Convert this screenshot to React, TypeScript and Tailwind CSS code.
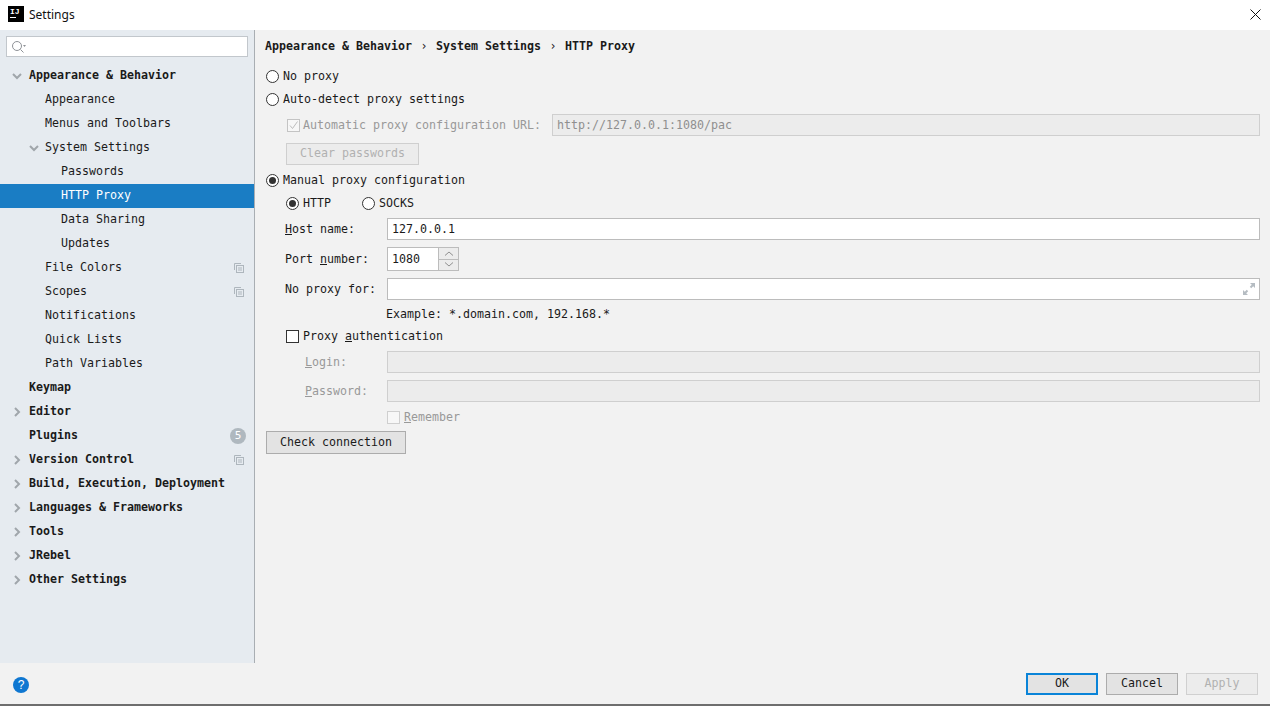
import React from 'react';

const mono = "font-['DejaVu_Sans_Mono',monospace] text-[11.63px]";

type TreeItem = {
  label: string;
  indent: 0 | 1 | 2;
  bold?: boolean;
  arrow?: 'open' | 'closed';
  selected?: boolean;
  copy?: boolean;
  badge?: string;
};

const tree: TreeItem[] = [
  { label: 'Appearance & Behavior', indent: 0, bold: true, arrow: 'open' },
  { label: 'Appearance', indent: 1 },
  { label: 'Menus and Toolbars', indent: 1 },
  { label: 'System Settings', indent: 1, arrow: 'open' },
  { label: 'Passwords', indent: 2 },
  { label: 'HTTP Proxy', indent: 2, selected: true },
  { label: 'Data Sharing', indent: 2 },
  { label: 'Updates', indent: 2 },
  { label: 'File Colors', indent: 1, copy: true },
  { label: 'Scopes', indent: 1, copy: true },
  { label: 'Notifications', indent: 1 },
  { label: 'Quick Lists', indent: 1 },
  { label: 'Path Variables', indent: 1 },
  { label: 'Keymap', indent: 0, bold: true },
  { label: 'Editor', indent: 0, bold: true, arrow: 'closed' },
  { label: 'Plugins', indent: 0, bold: true, badge: '5' },
  { label: 'Version Control', indent: 0, bold: true, arrow: 'closed', copy: true },
  { label: 'Build, Execution, Deployment', indent: 0, bold: true, arrow: 'closed' },
  { label: 'Languages & Frameworks', indent: 0, bold: true, arrow: 'closed' },
  { label: 'Tools', indent: 0, bold: true, arrow: 'closed' },
  { label: 'JRebel', indent: 0, bold: true, arrow: 'closed' },
  { label: 'Other Settings', indent: 0, bold: true, arrow: 'closed' },
];

const Arrow = ({ open }: { open: boolean }) => (
  <svg width="10" height="10" viewBox="0 0 10 10" fill="none" stroke="#a0a6ab" strokeWidth="2">
    {open ? <path d="M1 3l4 4 4-4" /> : <path d="M3 1l4 4-4 4" />}
  </svg>
);

const CopyIcon = () => (
  <svg width="10" height="10" viewBox="0 0 10 10" fill="none" stroke="#aeb6bd" strokeWidth="1">
    <path d="M.5 7V.5H7" />
    <rect x="2.5" y="2.5" width="7" height="7" />
    <path d="M4 5h4M4 7h4" />
  </svg>
);

const TreeRow = ({ item }: { item: TreeItem }) => {
  const pad = item.indent === 0 ? 'pl-[29px]' : item.indent === 1 ? 'pl-[45px]' : 'pl-[61px]';
  const arrowPos = item.indent === 0 ? 'left-[12px]' : 'left-[29px]';
  return (
    <div className={`relative flex h-6 items-center pr-[10px] ${pad} ${item.selected ? 'bg-[#1a7dc4] text-white' : 'text-[#1a1a1a]'}`}>
      {item.arrow && (
        <span className={`absolute top-[7px] ${arrowPos}`}>
          <Arrow open={item.arrow === 'open'} />
        </span>
      )}
      <span className={`flex-1 whitespace-pre ${item.bold ? 'font-bold' : ''}`}>{item.label}</span>
      {item.copy && <CopyIcon />}
      {item.badge && (
        <span className="-mr-[2px] flex h-4 w-4 items-center justify-center rounded-full bg-[#afb8bf] text-[11px] text-white">{item.badge}</span>
      )}
    </div>
  );
};

const Radio = ({ checked }: { checked?: boolean }) => (
  <span className="flex h-[13px] w-[13px] shrink-0 items-center justify-center rounded-full border border-[#333] bg-white">
    {checked && <span className="h-[7px] w-[7px] rounded-full bg-[#333]" />}
  </span>
);

const RadioRow = ({ label, checked, className }: { label: string; checked?: boolean; className: string }) => (
  <div className={`flex items-center gap-[4px] text-[#1a1a1a] ${className}`}>
    <Radio checked={checked} />
    <span className="whitespace-pre pt-[2px]">{label}</span>
  </div>
);

const Button = ({ children, className }: { children: React.ReactNode; className: string }) => (
  <button type="button" className={`flex items-center justify-center border ${className}`}>
    {children}
  </button>
);

export default function App() {
  return (
    <div className={`flex h-[706px] w-[1270px] flex-col overflow-hidden bg-white ${mono}`}>
      {/* Title bar */}
      <div className="flex h-[30px] shrink-0 items-center bg-white pl-2 pr-[9px]">
        <div className="mb-[2px] flex h-4 w-4 flex-col bg-black px-[2px] pt-[1px] text-white">
          <span className="font-['Liberation_Mono',monospace] text-[8px] font-bold leading-[9px]">IJ</span>
          <span className="mt-[1px] h-px w-[6px] bg-white" />
        </div>
        <span className="ml-[5px] flex-1 font-['Noto_Sans',sans-serif] text-[12px] text-[#111]">Settings</span>
        <svg className="mb-[2px]" width="11" height="11" viewBox="0 0 11 11" stroke="#111" strokeWidth="1" fill="none">
          <path d="M.5.5l10 10M10.5.5l-10 10" />
        </svg>
      </div>

      <div className="flex min-h-0 flex-1">
        {/* Sidebar */}
        <aside className="flex w-[255px] shrink-0 flex-col border-r border-[#a9aeb3] bg-[#e6ebf0]">
          <div className="mx-[6px] mt-[6px] flex h-[21px] w-[242px] items-center border border-[#c2c7cc] bg-white pl-[4px]">
            <svg width="16" height="14" viewBox="0 0 16 14" fill="none" stroke="#8e9297" strokeWidth="1">
              <circle cx="6" cy="6" r="4.5" />
              <path d="M9.5 9.5l3 3" />
              <path d="M12 5h3l-1.5 2z" fill="#8e9297" stroke="none" />
            </svg>
          </div>
          <div className="mt-[7px]">
            {tree.map(item => (
              <TreeRow key={item.label} item={item} />
            ))}
          </div>
        </aside>

        {/* HTTP Proxy page */}
        <main className="flex flex-1 flex-col bg-[#f2f2f2] pl-[11px] pr-[10px]">
          <div className="-ml-px mt-[7px] flex h-[18px] items-center whitespace-pre pt-[2px] font-bold text-[#1a1a1a]">
            Appearance & Behavior <span className="mx-[1.5px] font-normal">›</span> System Settings <span className="mx-[1.5px] font-normal">›</span> HTTP Proxy
          </div>

          <RadioRow label="No proxy" className="mt-[12px] h-[18px]" />
          <RadioRow label="Auto-detect proxy settings" className="mt-[5px] h-[18px]" />

          <div className="mt-[6px] flex h-[22px] items-center pl-[21px]">
            <span className="flex h-[13px] w-[13px] items-center justify-center border border-[#c4c4c4] bg-[#f7f7f7]">
              <svg width="11" height="11" viewBox="0 0 11 11" fill="none" stroke="#bdbdbd" strokeWidth="1">
                <path d="M2 5.5l2.5 3L9.5 1.5" />
              </svg>
            </span>
            <span className="ml-[3px] w-[249px] pt-[2px] text-[#999]">Automatic proxy configuration URL:</span>
            <div className="flex h-[22px] flex-1 items-center border border-[#cfcfcf] bg-[#ececec] pl-[4px] pt-[2px] text-[#8f8f8f]">http://127.0.0.1:1080/pac</div>
          </div>

          <Button className="ml-[20px] mt-[7px] h-[22px] w-[133px] border-[#cfcfcf] bg-[#ececec] text-[#b1b1b1]">Clear passwords</Button>

          <RadioRow label="Manual proxy configuration" checked className="mt-[6px] h-[18px]" />

          <div className="mt-[5px] flex h-[18px] items-center pl-[20px] text-[#1a1a1a]">
            <Radio checked />
            <span className="ml-[4px] w-[59px] pt-[2px]">HTTP</span>
            <Radio />
            <span className="ml-[4px] pt-[2px]">SOCKS</span>
          </div>

          <div className="mt-[6px] flex h-[22px] items-center pl-[19px] text-[#1a1a1a]">
            <span className="w-[102px] pt-[2px]"><span className="underline">H</span>ost name:</span>
            <div className="flex h-[22px] flex-1 items-center border border-[#bcbcbc] bg-white pl-[4px] pt-[2px]">127.0.0.1</div>
          </div>

          <div className="mt-[7px] flex h-[24px] items-center pl-[19px] text-[#1a1a1a]">
            <span className="w-[102px] pt-[2px]">Port <span className="underline">n</span>umber:</span>
            <div className="flex h-[24px] w-[72px] border border-[#bcbcbc] bg-white">
              <span className="flex-1 self-center pl-[4px] pt-[2px]">1080</span>
              <div className="flex w-[20px] flex-col border-l border-[#bcbcbc] bg-[#ececec]">
                <span className="flex flex-1 items-center justify-center border-b border-[#bcbcbc]">
                  <svg width="10" height="5" viewBox="0 0 10 5" fill="none" stroke="#8f8f8f"><path d="M1 4.5l4-3.5 4 3.5" /></svg>
                </span>
                <span className="flex flex-1 items-center justify-center">
                  <svg width="10" height="5" viewBox="0 0 10 5" fill="none" stroke="#8f8f8f"><path d="M1 .5l4 3.5 4-3.5" /></svg>
                </span>
              </div>
            </div>
          </div>

          <div className="mt-[7px] flex h-[22px] items-center pl-[19px] text-[#1a1a1a]">
            <span className="w-[102px] pt-[2px]">No proxy for:</span>
            <div className="flex h-[22px] flex-1 items-center justify-end border border-[#bcbcbc] bg-white pr-[4px]">
              <svg width="12" height="12" viewBox="0 0 12 12" fill="#b5bcc2" stroke="none">
                <path d="M7 0h5v5l-1.8-1.8-2 2-1.4-1.4 2-2zM0 12V7l1.8 1.8 2-2 1.4 1.4-2 2L5 12z" />
              </svg>
            </div>
          </div>

          <div className="mt-[5px] flex h-[18px] items-center pl-[120px] pt-[2px] text-[#1a1a1a]">Example: *.domain.com, 192.168.*</div>

          <div className="mt-[4px] flex h-[18px] items-center pl-[20px] text-[#1a1a1a]">
            <span className="h-[13px] w-[13px] border border-[#333] bg-white" />
            <span className="ml-[4px] pt-[2px]">Proxy <span className="underline">a</span>uthentication</span>
          </div>

          <div className="mt-[6px] flex h-[22px] items-center pl-[39px] text-[#999]">
            <span className="w-[82px] pt-[2px]"><span className="underline">L</span>ogin:</span>
            <div className="h-[22px] flex-1 border border-[#cfcfcf] bg-[#ececec]" />
          </div>

          <div className="mt-[7px] flex h-[22px] items-center pl-[39px] text-[#999]">
            <span className="w-[82px] pt-[2px]"><span className="underline">P</span>assword:</span>
            <div className="h-[22px] flex-1 border border-[#cfcfcf] bg-[#ececec]" />
          </div>

          <div className="mt-[6px] flex h-[18px] items-center pl-[121px] text-[#999]">
            <span className="h-[13px] w-[13px] border border-[#cfcfcf] bg-[#f7f7f7]" />
            <span className="ml-[4px] pt-[2px]"><span className="underline">R</span>emember</span>
          </div>

          <Button className="mt-[5px] h-[23px] w-[140px] border-[#acacac] bg-[#e3e3e3] text-[#1a1a1a]">Check connection</Button>
        </main>
      </div>

      {/* Footer */}
      <footer className="flex h-[41px] shrink-0 items-start bg-[#f2f2f2] pl-[13px] pr-[12px] pt-[10px]">
        <span className="mt-[4px] flex h-4 w-4 items-center justify-center rounded-full bg-[#0f77d1] font-['Liberation_Sans',sans-serif] text-[12px] text-white">?</span>
        <div className="ml-auto flex gap-[8px]">
          <Button className="h-[22px] w-[72px] border-2 border-[#0a84d8] bg-[#e3e3e3] text-[#1a1a1a]">OK</Button>
          <Button className="h-[22px] w-[72px] border-[#acacac] bg-[#e3e3e3] text-[#1a1a1a]">Cancel</Button>
          <Button className="h-[22px] w-[72px] border-[#d0d0d0] bg-[#ececec] text-[#b1b1b1]">Apply</Button>
        </div>
      </footer>
      <div className="h-[2px] shrink-0 bg-[#6e6e6e]" />
    </div>
  );
}
